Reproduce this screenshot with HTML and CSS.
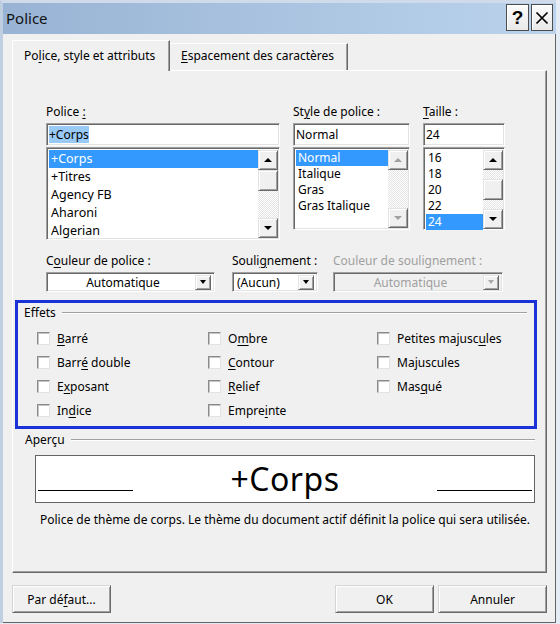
FILE: index.html
```html
<!DOCTYPE html>
<html lang="fr">
<head>
<meta charset="utf-8">
<title>Police</title>
<link rel="stylesheet" href="styles.css">
</head>
<body>
<div class="window">
  <div class="titlebar">
    <span class="title">Police</span>
    <div class="caption-btns">
      <span class="cap-btn help">?</span>
      <span class="cap-btn close"><svg width="14" height="14" viewBox="0 0 14 14"><path d="M1.5 1.5 L12.5 12.5 M12.5 1.5 L1.5 12.5" stroke="#000" stroke-width="1.7" fill="none"/></svg></span>
    </div>
  </div>
  <div class="client">
    <div class="tabs">
      <div class="tab active">Po<u>l</u>ice, style et attributs</div>
      <div class="tab second"><u>E</u>spacement des caractères</div>
    </div>
    <div class="panel">
      <div class="font-row">
        <div class="col">
          <div class="lbl">Police <u>:</u></div>
          <div class="field"><span class="sel-text">+Corps</span></div>
          <div class="listbox lb-font">
            <div class="items">
              <div class="item selected">+Corps</div>
              <div class="item">+Titres</div>
              <div class="item">Agency FB</div>
              <div class="item">Aharoni</div>
              <div class="item">Algerian</div>
            </div>
            <div class="vscroll">
              <div class="sb-btn"><span class="arr up"></span></div>
              <div class="sb-btn thumb"></div>
              <div class="sb-track"></div>
              <div class="sb-btn"><span class="arr down"></span></div>
            </div>
          </div>
        </div>
        <div class="col">
          <div class="lbl">St<u>y</u>le de police :</div>
          <div class="field">Normal</div>
          <div class="listbox lb-small">
            <div class="items">
              <div class="item selected">Normal</div>
              <div class="item">Italique</div>
              <div class="item">Gras</div>
              <div class="item">Gras Italique</div>
            </div>
            <div class="vscroll">
              <div class="sb-btn"><span class="arr up dis"></span></div>
              <div class="sb-track"></div>
              <div class="sb-btn"><span class="arr down dis"></span></div>
            </div>
          </div>
        </div>
        <div class="col">
          <div class="lbl"><u>T</u>aille :</div>
          <div class="field">24</div>
          <div class="listbox lb-small">
            <div class="items">
              <div class="item">16</div>
              <div class="item">18</div>
              <div class="item">20</div>
              <div class="item">22</div>
              <div class="item selected">24</div>
            </div>
            <div class="vscroll">
              <div class="sb-btn"><span class="arr up"></span></div>
              <div class="sb-track short"></div>
              <div class="sb-btn thumb"></div>
              <div class="sb-track short2"></div>
              <div class="sb-btn"><span class="arr down"></span></div>
            </div>
          </div>
        </div>
      </div>

      <div class="color-row">
        <div class="dd-col c1">
          <div class="lbl">C<u>o</u>uleur de police :</div>
          <div class="dropdown center">
            <span class="dd-text">Automatique</span>
            <span class="dd-btn"><span class="arr small"></span></span>
          </div>
        </div>
        <div class="dd-col c2">
          <div class="lbl">Souli<u>g</u>nement :</div>
          <div class="dropdown">
            <span class="dd-text">(Aucun)</span>
            <span class="dd-btn"><span class="arr small"></span></span>
          </div>
        </div>
        <div class="dd-col c3">
          <div class="lbl disabled">Couleur de soulignement :</div>
          <div class="dropdown center off">
            <span class="dd-text">Automatique</span>
            <span class="dd-btn"><span class="arr small dis"></span></span>
          </div>
        </div>
      </div>

      <div class="effets">
        <div class="group-head"><span>Effets</span><span class="gline"></span></div>
        <div class="checks">
          <label class="chk"><span class="box"></span><span><u>B</u>arré</span></label>
          <label class="chk"><span class="box"></span><span>Barr<u>é</u> double</span></label>
          <label class="chk"><span class="box"></span><span>E<u>x</u>posant</span></label>
          <label class="chk"><span class="box"></span><span>In<u>d</u>ice</span></label>
          <label class="chk"><span class="box"></span><span>O<u>m</u>bre</span></label>
          <label class="chk"><span class="box"></span><span><u>C</u>ontour</span></label>
          <label class="chk"><span class="box"></span><span><u>R</u>elief</span></label>
          <label class="chk"><span class="box"></span><span>Empre<u>i</u>nte</span></label>
          <label class="chk"><span class="box"></span><span>Petites majusc<u>u</u>les</span></label>
          <label class="chk"><span class="box"></span><span>Ma<u>j</u>uscules</span></label>
          <label class="chk"><span class="box"></span><span>Mas<u>q</u>ué</span></label>
        </div>
      </div>

      <div class="group-head apercu"><span>Aperçu</span><span class="gline"></span></div>
      <div class="preview">
        <span class="base left"></span>
        <span class="sample">+Corps</span>
        <span class="base right"></span>
      </div>
      <div class="desc">Police de thème de corps. Le thème du document actif définit la police qui sera utilisée.</div>
    </div>
    <div class="footer">
      <span class="btn">Par dé<u>f</u>aut...</span>
      <div class="right-btns">
        <span class="btn ok">OK</span>
        <span class="btn cancel">Annuler</span>
      </div>
    </div>
  </div>
</div>
</body>
</html>
```

FILE: styles.css
```css
* { box-sizing: border-box; }
body {
  margin: 0;
  background: #e4ecf5;
  font-family: "Noto Sans", sans-serif;
  font-size: 12px;
  color: #000;
}
u { text-decoration: underline; text-underline-offset: 2px; text-decoration-thickness: 1px; }

.window {
  width: 556px;
  height: 623px;
  border-top: 3px solid #cfdbea;
  border-left: 3px solid #bfcee0;
  background: #f0f0f0;
  display: flex;
  flex-direction: column;
}
.titlebar {
  height: 31px;
  flex: none;
  background: linear-gradient(to right, #98b3d4, #bbd3ec);
  display: flex;
  justify-content: space-between;
  padding: 0 3px 0 3px;
}
.title {
  font-size: 15px;
  line-height: 31px;
  color: #111;
}
.caption-btns {
  display: flex;
  gap: 2px;
  margin-top: 1px;
}
.cap-btn {
  height: 27px;
  width: 23px;
  background: linear-gradient(#fbfbfb, #e9e9e9);
  border: 1px solid #4d4d4d;
  box-shadow: inset 1px 1px #fff;
  display: flex;
  align-items: center;
  justify-content: center;
}
.cap-btn.help {
  font-family: "Liberation Sans", sans-serif;
  font-weight: bold;
  font-size: 19px;
}
.cap-btn.close { width: 22px; }

.client {
  flex: 1;
  border-right: 1px solid #646464;
  border-bottom: 1px solid #646464;
  padding: 6px 0 0 9px;
}
.tabs {
  display: flex;
  align-items: flex-end;
  height: 30px;
  position: relative;
  z-index: 1;
}
.tab {
  height: 27px;
  width: 178px;
  padding: 4px 0 0 11px;
  line-height: 16px;
  border-top: 1px solid #fff;
  border-right: 1px solid #696969;
  box-shadow: inset -1px 0 #a0a0a0;
  white-space: nowrap;
}
.tab.active {
  width: 158px;
  height: 31px;
  margin-bottom: -1px;
  padding: 7px 0 0 11px;
  border-left: 1px solid #fff;
  background: #f0f0f0;
}

.panel {
  width: 535px;
  height: 503px;
  border: 1px solid;
  border-color: #fff #696969 #696969 #fff;
  box-shadow: inset -1px -1px #a0a0a0;
}

.lbl { line-height: 15px; height: 15px; margin-bottom: 4px; white-space: nowrap; }
.lbl.disabled { color: #a0a0a0; }

.font-row {
  display: grid;
  grid-template-columns: 234px 117px 82px;
  column-gap: 13px;
  margin: 33px 0 0 33px;
  align-items: start;
}
.sunken {
}
.field, .listbox, .dropdown {
  border: 1px solid;
  border-color: #a0a0a0 #fff #fff #a0a0a0;
  box-shadow: inset 1px 1px #696969, inset -1px -1px #e3e3e3;
  background: #fff;
}
.field {
  height: 23px;
  line-height: 21px;
  padding-left: 2px;
  margin-bottom: 1px;
}
.sel-text { background: #99c9f7; }

.listbox {
  display: flex;
  padding: 2px 1px 1px 2px;
}
.lb-font { height: 93px; }
.lb-small { height: 83px; }
.items { flex: 1; }
.item { height: 16px; line-height: 16px; padding-left: 2px; white-space: nowrap; }
.lb-font .item { height: 18px; line-height: 18px; font-size: 12.5px; }
.item.selected { background: #3399ff; color: #fff; }

.vscroll {
  width: 20px;
  display: flex;
  flex-direction: column;
}
.sb-btn {
  height: 20px;
  flex: none;
  background: #f0f0f0;
  border: 1px solid;
  border-color: #e3e3e3 #696969 #696969 #e3e3e3;
  box-shadow: inset 1px 1px #fff, inset -1px -1px #a0a0a0;
  display: flex;
  align-items: center;
  justify-content: center;
}
.sb-btn.thumb { height: 21px; }
.sb-track {
  flex: 1;
  background: repeating-conic-gradient(#fff 0 25%, #e4e4e4 0 50%) 0 0 / 2px 2px;
}
.sb-track.short { flex: 0 0 9px; }
.sb-track.short2 { flex: 0 0 9px; }

.arr { width: 0; height: 0; border-left: 4px solid transparent; border-right: 4px solid transparent; }
.arr.up { border-bottom: 4px solid #000; }
.arr.down { border-top: 4px solid #000; }
.arr.up.dis { border-bottom-color: #a0a0a0; }
.arr.down.dis { border-top-color: #a0a0a0; }
.arr.small { border-left-width: 3.5px; border-right-width: 3.5px; border-top: 4px solid #000; }
.arr.small.dis { border-top-color: #a8a8a8; }

.color-row {
  display: flex;
  margin: 13px 0 0 33px;
}
.dd-col.c1 { width: 169px; }
.dd-col.c2 { width: 86px; margin-left: 17px; }
.dd-col.c3 { width: 170px; margin-left: 15px; }
.dropdown {
  height: 20px;
  display: flex;
  align-items: center;
  padding: 0 3px 0 4px;
}
.dd-text { flex: 1; white-space: nowrap; }
.dropdown.center .dd-text { text-align: center; }
.dropdown.off { background: #f0f0f0; color: #a0a0a0; }
.dd-btn {
  width: 16px;
  height: 15px;
  background: #f0f0f0;
  border: 1px solid;
  border-color: #e3e3e3 #696969 #696969 #e3e3e3;
  box-shadow: inset 1px 1px #fff, inset -1px -1px #a0a0a0;
  display: flex;
  align-items: center;
  justify-content: center;
}

.effets {
  width: 522px;
  height: 129px;
  margin: 8px 0 0 2px;
  border: 3px solid #1a33d8;
  padding: 2px 7px 0 6px;
}
.group-head {
  display: flex;
  align-items: center;
  line-height: 16px;
  height: 16px;
}
.gline {
  flex: 1;
  margin-left: 6px;
  height: 2px;
  border-top: 1px solid #a0a0a0;
  border-bottom: 1px solid #fff;
}
.checks {
  display: grid;
  grid-auto-flow: column;
  grid-template-rows: repeat(4, 24px);
  grid-template-columns: 171px 169px 1fr;
  margin: 5px 0 0 13px;
}
.chk {
  display: flex;
  align-items: center;
  gap: 7px;
  white-space: nowrap;
}
.box {
  width: 13px;
  height: 13px;
  flex: none;
  background: #fff;
  border: 1px solid;
  border-color: #8a8a8a #e3e3e3 #e3e3e3 #8a8a8a;
  box-shadow: inset 1px 1px #c4c4c4;
}

.apercu {
  margin: 3px 11px 0 12px;
}
.preview {
  width: 500px;
  height: 48px;
  margin: 7px 0 0 22px;
  border: 1px solid #646464;
  background: #fff;
  display: flex;
  padding: 0 2px;
}
.base {
  width: 95px;
  align-self: flex-end;
  margin-bottom: 11px;
  border-bottom: 1px solid #000;
}
.sample {
  flex: 1;
  text-align: center;
  font-size: 32px;
  line-height: 46px;
  letter-spacing: 0.5px;
}
.desc {
  margin: 9px 0 0 27px;
  line-height: 16px;
  white-space: nowrap;
}

.footer {
  width: 535px;
  margin-top: 12px;
  display: flex;
  justify-content: space-between;
}
.right-btns { display: flex; gap: 4px; }
.btn {
  height: 28px;
  width: 99px;
  display: flex;
  align-items: center;
  justify-content: center;
  background: #f0f0f0;
  border: 1px solid;
  border-color: #d5d5d5 #696969 #696969 #d5d5d5;
  box-shadow: inset 1px 1px #fff, inset -1px -1px #a0a0a0;
}
.btn.cancel { width: 109px; }
```
